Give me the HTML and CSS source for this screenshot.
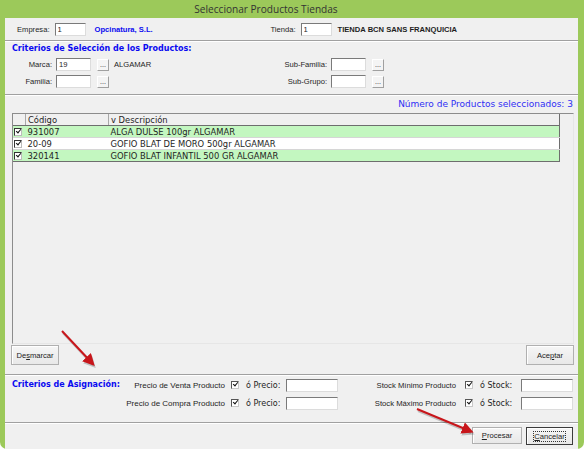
FILE: index.html
```html
<!DOCTYPE html>
<html lang="es">
<head>
  <meta charset="UTF-8">
  <title>Seleccionar Productos Tiendas</title>
  <link rel="stylesheet" href="styles.css">
</head>
<body>
  <div class="window">
    <div class="titlebar">Seleccionar Productos Tiendas</div>

    <div class="client">
      <!-- empresa / tienda -->
      <div class="band top">
        <label class="lbl">Empresa:</label>
        <input class="field w31" value="1">
        <span class="company">Opcinatura, S.L.</span>
        <label class="lbl">Tienda:</label>
        <input class="field w31" value="1">
        <span class="store">TIENDA BCN SANS FRANQUICIA</span>
      </div>

      <!-- filtros de productos -->
      <section class="band criteria">
        <h2 class="heading">Criterios de Selección de los Productos:</h2>
        <div class="crit-row">
          <label class="lbl crit-lbl">Marca:</label>
          <input class="field w35" value="19">
          <button class="dots">...</button>
          <span class="crit-desc">ALGAMAR</span>
          <label class="lbl crit-lbl2">Sub-Familia:</label>
          <input class="field w35">
          <button class="dots">...</button>
        </div>
        <div class="crit-row">
          <label class="lbl crit-lbl">Familia:</label>
          <input class="field w35">
          <button class="dots">...</button>
          <span class="crit-desc"></span>
          <label class="lbl crit-lbl2">Sub-Grupo:</label>
          <input class="field w35">
          <button class="dots">...</button>
        </div>
      </section>

      <!-- lista de productos -->
      <section class="band products">
        <div class="count">Número de Productos seleccionados: 3</div>
        <div class="grid-panel">
          <table class="grid">
            <thead>
              <tr>
                <th class="c-check"></th>
                <th class="c-code">Código</th>
                <th class="c-desc">v Descripción</th>
              </tr>
            </thead>
            <tbody>
              <tr class="odd">
                <td class="c-check"><span class="tick"></span></td>
                <td>931007</td>
                <td>ALGA DULSE 100gr ALGAMAR</td>
              </tr>
              <tr>
                <td class="c-check"><span class="tick"></span></td>
                <td>20-09</td>
                <td>GOFIO BLAT DE MORO 500gr ALGAMAR</td>
              </tr>
              <tr class="odd">
                <td class="c-check"><span class="tick"></span></td>
                <td>320141</td>
                <td>GOFIO BLAT INFANTIL 500 GR ALGAMAR</td>
              </tr>
            </tbody>
          </table>
        </div>
        <div class="grid-actions">
          <button class="btn btn-wide">De<u>s</u>marcar</button>
          <button class="btn btn-wide">Ace<u>p</u>tar</button>
        </div>
      </section>

      <!-- criterios de asignación -->
      <section class="band assign">
        <h2 class="heading assign-title">Criterios de Asignación:</h2>
        <span class="lbl a-lbl">Precio de Venta Producto</span>
        <span class="box"><span class="tick"></span></span>
        <span class="or">ó Precio:</span>
        <input class="field w52">
        <span class="lbl a-lbl s-lbl">Stock Mínimo Producto</span>
        <span class="box box-r"><span class="tick"></span></span>
        <span class="or">ó Stock:</span>
        <input class="field w52">

        <span class="lbl a-lbl a-lbl1">Precio de Compra Producto</span>
        <span class="box"><span class="tick"></span></span>
        <span class="or">ó Precio:</span>
        <input class="field w52">
        <span class="lbl a-lbl s-lbl">Stock Máximo Producto</span>
        <span class="box box-r"><span class="tick"></span></span>
        <span class="or">ó Stock:</span>
        <input class="field w52">
      </section>

      <div class="band footer">
        <button class="btn btn-proc"><u>P</u>rocesar</button>
        <button class="btn btn-default"><span class="focus"><u>C</u>ancelar</span></button>
      </div>
    </div>

    <!-- flechas de anotación -->
    <svg class="arrows" width="584" height="449" viewBox="0 0 584 449">
      <defs>
        <marker id="head" markerWidth="6" markerHeight="6" refX="4" refY="3" orient="auto" markerUnits="strokeWidth">
          <path d="M0,0 L6,3 L0,6 Z" fill="#c8161b"/>
        </marker>
        <marker id="head-shadow" markerWidth="6" markerHeight="6" refX="4" refY="3" orient="auto" markerUnits="strokeWidth">
          <path d="M0,0 L6,3 L0,6 Z" fill="#000" fill-opacity=".2"/>
        </marker>
      </defs>
      <line x1="63" y1="333" x2="93" y2="365" stroke="#000" stroke-opacity=".2" stroke-width="2" marker-end="url(#head-shadow)"/>
      <line x1="418" y1="411" x2="471" y2="433" stroke="#000" stroke-opacity=".2" stroke-width="2" marker-end="url(#head-shadow)"/>
      <line x1="62" y1="331" x2="92" y2="363" stroke="#c8161b" stroke-width="2" marker-end="url(#head)"/>
      <line x1="417" y1="409" x2="470" y2="431" stroke="#c8161b" stroke-width="2" marker-end="url(#head)"/>
    </svg>
  </div>
</body>
</html>
```

FILE: styles.css
```css
body {
  margin: 0;
  background: #fff;
}
.window {
  background: #9cc95a;
  border-radius: 0 0 7px 7px;
  box-sizing: border-box;
  color: #1e1e1e;
  display: flex;
  flex-direction: column;
  font-family: "Liberation Sans", Arial, sans-serif;
  font-size: 7.6px;
  height: 449px;
  padding: 0 6px 6px 5px;
  position: relative;
  width: 584px;
}
.titlebar {
  color: #333;
  font-family: "Open Sans", sans-serif;
  font-size: 10.1px;
  height: 20px;
  line-height: 18px;
  padding-right: 51px;
  text-align: center;
}
.client {
  background: #f0f0f0;
  display: flex;
  flex: 1;
  flex-direction: column;
}
.band + .band {
  border-top: 1px solid #a0a0a0;
  box-shadow: inset 0 1px #fff;
}

/* controles básicos */
.lbl {
  white-space: nowrap;
}
.field {
  background: #fff;
  border: 1px solid;
  border-color: #7a7a7a #dcdcdc #dcdcdc #7a7a7a;
  box-sizing: border-box;
  color: #1e1e1e;
  font-family: "Liberation Sans", Arial, sans-serif;
  font-size: 7.6px;
  height: 13px;
  margin: 0;
  padding: 0 2px;
}
.w31 { width: 31px; }
.w35 { width: 35px; }
.w52 { width: 52px; }
.dots {
  background: #f4f4f4;
  border: 1px solid;
  border-color: #fff #a0a0a0 #a0a0a0 #fff;
  box-sizing: border-box;
  color: #222;
  font-family: "Liberation Sans", Arial, sans-serif;
  font-size: 7px;
  height: 12px;
  line-height: 8px;
  margin: 0;
  padding: 0;
  width: 12px;
}
.btn {
  background: linear-gradient(#f6f6f6, #e8e8e8);
  border: 1px solid #b0b0b0;
  box-shadow: inset 1px 1px #fff;
  box-sizing: border-box;
  color: #222;
  font-family: "Liberation Sans", Arial, sans-serif;
  font-size: 7.6px;
  margin: 0;
  padding: 0;
}
.btn u {
  text-decoration-thickness: 1px;
}
.heading {
  color: #0a0af0;
  font-family: "DejaVu Sans", Verdana, sans-serif;
  font-size: 8px;
  font-weight: bold;
  line-height: 12px;
  margin: 0;
}
.box {
  background: #fff;
  border: 1px solid;
  border-color: #555 #c8c8c8 #c8c8c8 #555;
  box-sizing: border-box;
  display: inline-block;
  height: 8px;
  position: relative;
  width: 8px;
}
.tick::before {
  border-bottom: 1.5px solid #111;
  border-left: 1.5px solid #111;
  content: "";
  height: 2px;
  left: 1px;
  position: absolute;
  top: 0;
  transform: rotate(-50deg);
  width: 4px;
}

/* empresa / tienda */
.top {
  align-items: center;
  display: flex;
  height: 22px;
  padding-left: 12px;
}
.top .field {
  margin-left: 5px;
}
.company {
  color: #0a0af0;
  font-weight: bold;
  margin-left: 9px;
  width: 176px;
}
.store {
  font-weight: bold;
  margin-left: 6px;
}

/* criterios de selección */
.criteria {
  height: 51px;
  padding: 2px 0 0 7px;
}
.crit-row {
  align-items: center;
  display: flex;
  height: 13px;
  margin-top: 3px;
}
.crit-row + .crit-row {
  margin-top: 4px;
}
.crit-lbl {
  text-align: right;
  width: 40px;
}
.crit-lbl2 {
  text-align: right;
  width: 60px;
}
.crit-row .field {
  margin: 0 6px 0 4px;
}
.crit-desc {
  margin-left: 5px;
  width: 153px;
}

/* productos */
.products {
  display: flex;
  flex-direction: column;
  height: 275px;
  padding: 4px 4px 0 7px;
}
.count {
  color: #2e2ef5;
  font-family: "DejaVu Sans", Verdana, sans-serif;
  font-size: 9px;
  line-height: 10px;
  text-align: right;
  padding-right: 1px;
}
.grid-panel {
  border: 1px solid;
  border-color: #8c8c8c #e6e6e6 #e6e6e6 #8c8c8c;
  height: 231px;
  box-sizing: border-box;
  margin-top: 4px;
}
.grid {
  border-collapse: collapse;
  font-family: "DejaVu Sans", Verdana, sans-serif;
  font-size: 8.4px;
  width: 547px;
}
.grid th,
.grid td {
  height: 11px;
  line-height: 10px;
  padding: 0 0 0 2px;
  text-align: left;
  white-space: nowrap;
}
.grid th {
  background: #f0f0f0;
  border-bottom: 1px solid #6e6e6e;
  border-right: 1px solid #a8a8a8;
  font-weight: normal;
}
.grid th:last-child {
  border-right: 1px solid #6e6e6e;
}
.grid td {
  background: #fff;
  border-bottom: 1px solid #d6d6d6;
}
.grid td:last-child {
  border-right: 1px solid #6e6e6e;
}
.grid tr:last-child td {
  border-bottom: 1px solid #6e6e6e;
}
.grid .odd td {
  background: #c3f7c0;
}
.c-check {
  width: 10px;
}
.c-code {
  width: 80px;
}
.grid td.c-check {
  padding: 0 0 0 1px;
}
.grid .tick {
  background: #fff;
  border: 1px solid;
  border-color: #333 #bbb #bbb #333;
  box-sizing: border-box;
  display: block;
  height: 8px;
  position: relative;
  width: 8px;
}
.grid-actions {
  display: flex;
  justify-content: space-between;
  margin-top: 1px;
  padding-left: 0;
}
.btn-wide {
  height: 20px;
  margin-left: -1px;
  width: 48px;
}

/* criterios de asignación */
.assign {
  align-items: center;
  display: grid;
  grid-template-columns: 113px 100px 21px 40px 52px 118px 24px 41px 52px;
  grid-template-rows: 18px 18px;
  height: 46px;
  padding: 1px 0 0 7px;
}
.assign-title {
  grid-column: 1;
}
.a-lbl {
  font-size: 8px;
  text-align: right;
}
.a-lbl.s-lbl {
  font-size: 7.7px;
}
.a-lbl1 {
  grid-column: 2;
}
.assign .box {
  margin-left: 6px;
}
.assign .box-r {
  margin-left: 9px;
}
.or {
  font-family: "DejaVu Sans", Verdana, sans-serif;
  font-size: 8px;
}

/* botonera */
.footer {
  align-items: flex-start;
  display: flex;
  gap: 4px;
  height: 25px;
  justify-content: flex-end;
  padding: 4px 5px 0 0;
}
.btn-proc {
  height: 17px;
  width: 50px;
}
.btn-default {
  border-color: #3c3c3c;
  height: 18px;
  width: 47px;
}
.focus {
  outline: 1px dotted #333;
  outline-offset: 0;
}

.arrows {
  left: 0;
  pointer-events: none;
  position: absolute;
  top: 0;
}
```
